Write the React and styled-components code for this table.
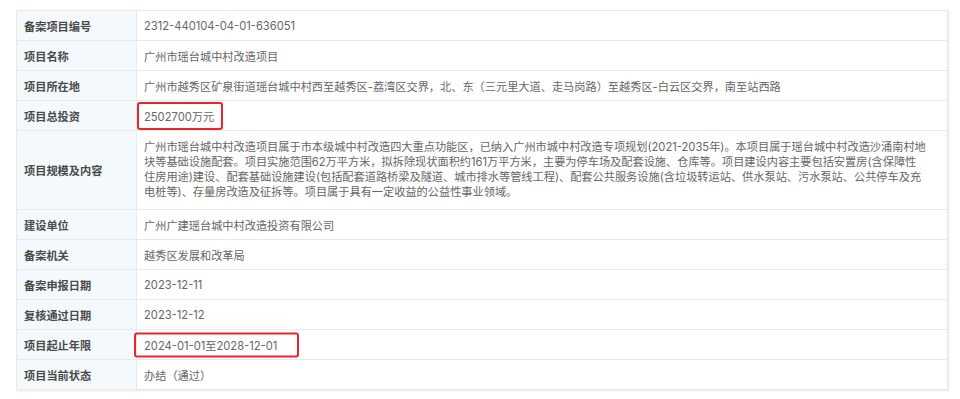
import React from 'react';
import styled, { createGlobalStyle } from 'styled-components';

const GlobalStyle = createGlobalStyle`
  html, body {
    margin: 0;
    padding: 0;
    background: #ffffff;
  }
  body {
    font-family: Inter, "Noto Sans CJK SC", "Noto Sans", sans-serif;
  }
`;

// 备案信息
const rows = [
	{ label: '备案项目编号', value: '2312-440104-04-01-636051' },
	{ label: '项目名称', value: '广州市瑶台城中村改造项目' },
	{ label: '项目所在地', value: '广州市越秀区矿泉街道瑶台城中村西至越秀区-荔湾区交界，北、东（三元里大道、走马岗路）至越秀区-白云区交界，南至站西路' },
	{ label: '项目总投资', value: '2502700万元', mark: { w: 86, h: 28 } },
	{
		label: '项目规模及内容',
		tall: true,
		lines: [
			'广州市瑶台城中村改造项目属于市本级城中村改造四大重点功能区，已纳入广州市城中村改造专项规划(2021-2035年)。本项目属于瑶台城中村改造沙涌南村地',
			'块等基础设施配套。项目实施范围62万平方米，拟拆除现状面积约161万平方米，主要为停车场及配套设施、仓库等。项目建设内容主要包括安置房(含保障性',
			'住房用途)建设、配套基础设施建设(包括配套道路桥梁及隧道、城市排水等管线工程)、配套公共服务设施(含垃圾转运站、供水泵站、污水泵站、公共停车及充',
			'电桩等)、存量房改造及征拆等。项目属于具有一定收益的公益性事业领域。',
		],
	},
	{ label: '建设单位', value: '广州广建瑶台城中村改造投资有限公司' },
	{ label: '备案机关', value: '越秀区发展和改革局' },
	{ label: '备案申报日期', value: '2023-12-11' },
	{ label: '复核通过日期', value: '2023-12-12' },
	{ label: '项目起止年限', value: '2024-01-01至2028-12-01', mark: { w: 165, h: 25, left: -3 } },
	{ label: '项目当前状态', value: '办结（通过）' },
];

function App() {
	return (
		<>
			<GlobalStyle />
			<Page>
				<Table>
					{rows.map((row) => (
						<Row key={row.label} $tall={row.tall}>
							<Label>{row.label}</Label>
							<Value $tall={row.tall}>
								{row.lines
									? row.lines.map((l) => <Line key={l}>{l}</Line>)
									: row.value}
								{row.mark && (
									<Mark $w={row.mark.w} $h={row.mark.h} $left={row.mark.left || 0} />
								)}
							</Value>
						</Row>
					))}
				</Table>
			</Page>
		</>
	);
}

const Page = styled.div`
  width: 960px;
  height: 399px;
  padding: 10px 14px 0 16px;
  box-sizing: border-box;
  background: #fff;
`;

const Table = styled.div`
  width: 930px;
  border: 1px solid #e9e9e9;
  border-bottom: 0;
  box-shadow: 1px 1px 2px rgba(0, 0, 0, 0.1);
  display: flex;
  flex-direction: column;
`;

const Row = styled.div`
  display: grid;
  grid-template-columns: 120px 1fr;
  height: ${(p) => (p.$tall ? '78px' : '29px')};
  border-bottom: 1px solid #e9e9e9;
`;

const Label = styled.div`
  background: #f3f9fc;
  border-right: 1px solid #e9e9e9;
  display: flex;
  align-items: center;
  padding-left: 7px;
  font-size: 11.2px;
  font-weight: 700;
  color: #4a4a4a;
`;

const Value = styled.div`
  position: relative;
  display: flex;
  flex-direction: ${(p) => (p.$tall ? 'column' : 'row')};
  justify-content: ${(p) => (p.$tall ? 'center' : 'flex-start')};
  align-items: ${(p) => (p.$tall ? 'flex-start' : 'center')};
  padding-left: 7px;
  font-size: 11.2px;
  color: #666;
  white-space: nowrap;
`;

const Line = styled.div`
  line-height: 15px;
`;

// 红色标注框
const Mark = styled.div`
  position: absolute;
  left: ${(p) => p.$left}px;
  top: 50%;
  width: ${(p) => p.$w}px;
  height: ${(p) => p.$h}px;
  transform: translateY(-50%);
  border: 2px solid #e8262b;
  border-radius: 3px;
  box-sizing: border-box;
  pointer-events: none;
`;

export default App;
